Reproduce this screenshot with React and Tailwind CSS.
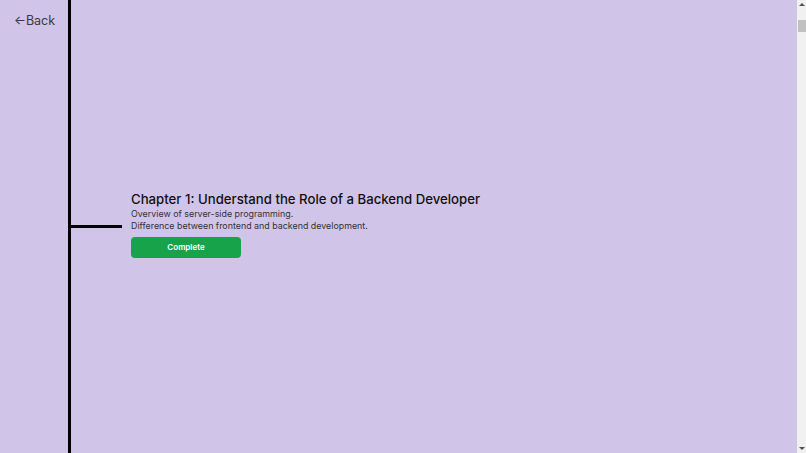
const chapter = {
  title: "Chapter 1: Understand the Role of a Backend Developer",
  points: [
    "Overview of server-side programming.",
    "Difference between frontend and backend development.",
  ],
};

function FakeScrollbar() {
  return (
    <div className="flex w-[9px] shrink-0 flex-col items-center bg-[#f1f1f1]">
      <div className="mt-[3px] h-0 w-0 border-x-[3px] border-b-[3px] border-x-transparent border-b-[#505050]" />
      <div className="mt-[14px] h-[12px] w-[8px] bg-[#c1c1c1]" />
      <div className="flex-1" />
      <div className="mb-[3px] h-0 w-0 border-x-[3px] border-t-[3px] border-x-transparent border-t-[#505050]" />
    </div>
  );
}

export default function App() {
  return (
    <div
      className="flex h-screen overflow-hidden bg-[#d1c4e9]"
      style={{ fontFamily: "Inter, 'Noto Sans', sans-serif" }}
    >
      <div className="w-[71px] shrink-0 border-r-[3px] border-black">
        <a href="#" className="block pl-[14px] pt-[14px] text-[12.5px] leading-[14px] text-[#3a3a3a]">
          ←Back
        </a>
      </div>
      <div className="flex flex-1 items-center">
        <div className="h-[3px] w-[51px] bg-black" />
        <div className="ml-[9px] mt-[-5px] flex flex-col">
          <h2 className="text-[13.2px] font-medium leading-[17px] text-[#111]">{chapter.title}</h2>
          {chapter.points.map((point) => (
            <p key={point} className="text-[8.9px] leading-[12px] text-[#333]">
              {point}
            </p>
          ))}
          <button className="mt-[5px] h-[21px] w-[110px] rounded-[4px] bg-[#16a34a] text-[8px] font-semibold text-white">
            Complete
          </button>
        </div>
      </div>
      <FakeScrollbar />
    </div>
  );
}
